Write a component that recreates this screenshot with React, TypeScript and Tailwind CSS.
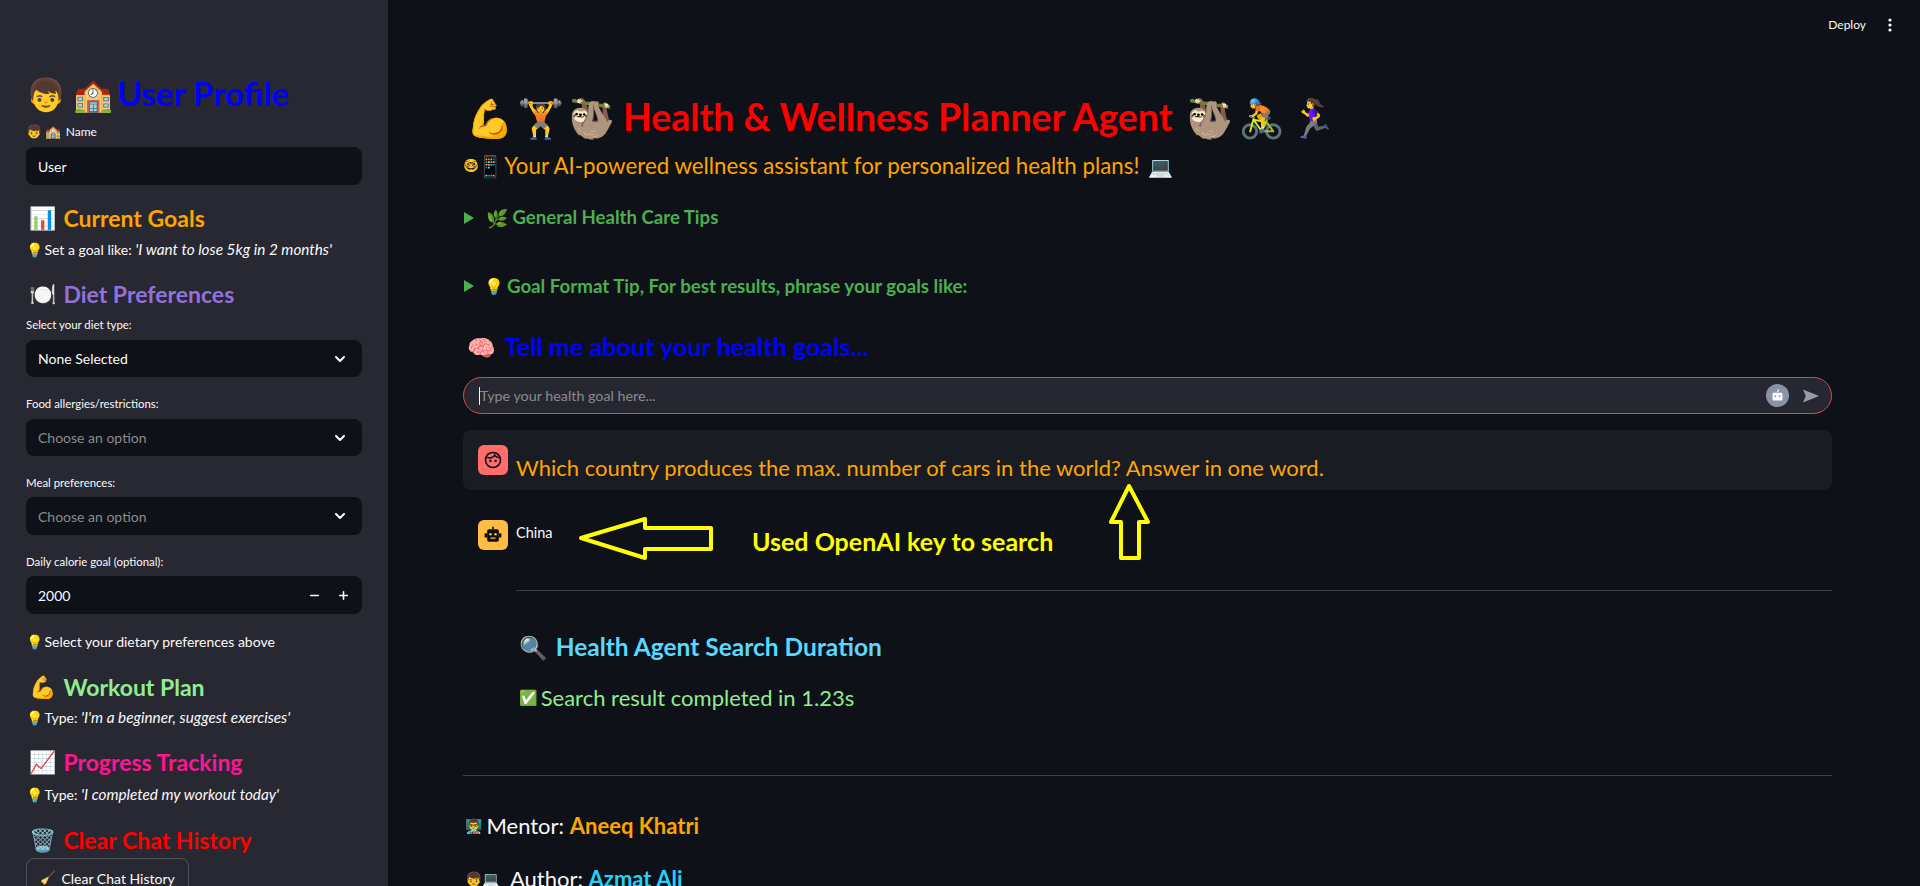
import React from "react";
import { ChevronDown, Minus, Plus } from "lucide-react";

const Bulb = () => <span className="text-[14px] mr-[1px]">💡</span>;
const It = ({ children }: { children: React.ReactNode }) => <em className="text-[15.3px]">{children}</em>;

function SideHeading({ icon, text, color }: { icon: string; text: string; color: string }) {
  return (
    <div className={`h-[28px] flex items-center text-[23px] font-bold leading-none whitespace-nowrap ${color}`}>
      <span className="ml-[3px] mr-[7px] text-[22px]">{icon}</span>
      {text}
    </div>
  );
}

function Hint({ children, className = "" }: { children: React.ReactNode; className?: string }) {
  return <div className={`h-[20px] flex items-center text-[14px] text-[#fafafa] whitespace-pre ${className}`}>{children}</div>;
}

function Label({ children, className = "" }: { children: React.ReactNode; className?: string }) {
  return <div className={`h-[20px] flex items-center text-[11.4px] text-[#fafafa] whitespace-pre ${className}`}>{children}</div>;
}

function Field({ children, className = "" }: { children: React.ReactNode; className?: string }) {
  return <div className={`w-[336px] bg-[#0e1117] rounded-[8px] flex items-center justify-between pl-[12px] pr-[14px] text-[14px] ${className}`}>{children}</div>;
}

function Sidebar() {
  return (
    <aside className="w-[388px] h-[886px] shrink-0 bg-[#282832] overflow-hidden pl-[26px]">
      <div className="mt-[74px] h-[40px] flex items-center text-[33px] font-bold text-[#0000ff] whitespace-nowrap">
        <span className="text-[32px] mr-[4px]">👦 🏫</span>User Profile
      </div>
      <div className="mt-[8px] h-[20px] flex items-center text-[12px] text-[#fafafa] whitespace-pre"><span className="text-[13px] mr-[4px]">👦 🏫</span>Name</div>
      <Field className="mt-[5px] h-[38px] text-[#fafafa]">User</Field>
      <div className="mt-[19px]"><SideHeading icon="📊" text="Current Goals" color="text-[#ffa500]" /></div>
      <Hint className="mt-[7px]"><Bulb />Set a goal like: <It>'I want to lose 5kg in 2 months'</It></Hint>
      <div className="mt-[21px]"><SideHeading icon="🍽️" text="Diet Preferences" color="text-[#9370db]" /></div>
      <Label className="mt-[7px]">Select your diet type:</Label>
      <Field className="mt-[5px] h-[37px] text-[#fafafa]">None Selected<ChevronDown size={16} strokeWidth={3} /></Field>
      <Label className="mt-[17px]">Food allergies/restrictions:</Label>
      <Field className="mt-[5px] h-[37px] text-[#8a8b90]">Choose an option<ChevronDown size={16} strokeWidth={3} className="text-[#fafafa]" /></Field>
      <Label className="mt-[17px]">Meal preferences:</Label>
      <Field className="mt-[4px] h-[38px] text-[#8a8b90]">Choose an option<ChevronDown size={16} strokeWidth={3} className="text-[#fafafa]" /></Field>
      <Label className="mt-[17px]">Daily calorie goal (optional):</Label>
      <Field className="mt-[4px] h-[38px] !pr-[12px] text-[#fafafa]">2000
        <span className="flex items-center gap-[16px]"><Minus size={13} strokeWidth={3} /><Plus size={13} strokeWidth={3} /></span>
      </Field>
      <Hint className="mt-[17px]"><Bulb />Select your dietary preferences above</Hint>
      <div className="mt-[22px]"><SideHeading icon="💪" text="Workout Plan" color="text-[#90ee90]" /></div>
      <Hint className="mt-[6px]"><Bulb />Type: <It>'I'm a beginner, suggest exercises'</It></Hint>
      <div className="mt-[21px]"><SideHeading icon="📈" text="Progress Tracking" color="text-[#ff1493]" /></div>
      <Hint className="mt-[8px]"><Bulb />Type: <It>'I completed my workout today'</It></Hint>
      <div className="mt-[22px]"><SideHeading icon="🗑️" text="Clear Chat History" color="text-[#ff0000]" /></div>
      <div className="mt-[4px] w-[163px] h-[40px] rounded-[8px] border border-[#50515a] flex items-center justify-center text-[14px] text-[#fafafa]">
        <span className="text-[13px] mr-[5px]">🧹</span>Clear Chat History
      </div>
    </aside>
  );
}

function RobotFace({ className = "" }: { className?: string }) {
  return (
    <svg viewBox="0 0 24 24" className={className} aria-hidden="true">
      <rect x="12" y="3" width="1.6" height="4" fill="currentColor" transform="rotate(20 12 5)" />
      <rect x="5" y="8" width="14" height="11" rx="1.5" fill="currentColor" />
      <circle cx="9" cy="13" r="1.3" fill="#8a93a6" />
      <circle cx="15" cy="13" r="1.3" fill="#8a93a6" />
    </svg>
  );
}

function Annotations() {
  return (
    <>
      <svg className="absolute left-[570px] top-[510px] w-[600px] h-[60px]" viewBox="570 510 600 60" aria-hidden="true">
        <polygon points="581,538 645,519 645,528 711,528 711,549 645,549 645,558" fill="none" stroke="#ffff00" strokeWidth="4" strokeLinejoin="round" />
      </svg>
      <svg className="absolute left-[1100px] top-[478px] w-[60px] h-[90px]" viewBox="1100 478 60 90" aria-hidden="true">
        <polygon points="1129,486 1111,522 1121,522 1121,558 1139,558 1139,522 1148,522" fill="none" stroke="#ffff00" strokeWidth="4" strokeLinejoin="round" />
      </svg>
      <div className="absolute left-[752px] top-[527px] h-[30px] flex items-center text-[25px] font-bold text-[#ffff00] whitespace-nowrap">Used OpenAI key to search</div>
    </>
  );
}

function Triangle() {
  return (
    <svg viewBox="0 0 10 12" className="w-[10px] h-[12px] ml-[1px]" aria-hidden="true"><polygon points="0,0 10,6 0,12" fill="#4caf50" /></svg>
  );
}

function Main() {
  const Big = ({ e }: { e: string }) => <span className="text-[38px] mr-[4px]">{e}</span>;
  return (
    <main className="flex-1 h-[886px] overflow-hidden pl-[75px] pr-[88px]">
      <div className="h-[50px] flex items-center justify-end text-[12px] text-[#fafafa] -mr-[60px]">
        Deploy
        <svg viewBox="0 0 4 14" className="w-[4px] h-[14px] ml-[22px]" aria-hidden="true"><circle cx="2" cy="2" r="1.6" fill="#fafafa" /><circle cx="2" cy="7" r="1.6" fill="#fafafa" /><circle cx="2" cy="12" r="1.6" fill="#fafafa" /></svg>
      </div>
      <h1 className="mt-[42px] h-[50px] flex items-center text-[37.4px] font-bold text-[#ff0000] whitespace-pre pl-[3px]">
        <Big e="💪" /><Big e="🏋️" /><Big e="🦥" />
        <span className="ml-[3px] mr-[14px]">Health &amp; Wellness Planner Agent</span>
        <Big e="🦥" /><Big e="🚴" /><Big e="🏃‍♀️" />
      </h1>
      <div className="mt-[9px] h-[30px] flex items-center text-[22.3px] text-[#ffa500] whitespace-pre">
        <span className="text-[13px]">🤓</span><span className="text-[21px] -ml-[2px] mr-[1px]">📱</span>Your AI-powered wellness assistant for personalized health plans!<span className="text-[20px] ml-[9px]">💻</span>
      </div>
      <div className="mt-[25px] h-[24px] flex items-center text-[18.6px] font-bold text-[#4caf50] whitespace-pre">
        <Triangle /><span className="text-[18px] ml-[12px] mr-[4px]">🌿</span>General Health Care Tips
      </div>
      <div className="mt-[44px] h-[24px] flex items-center text-[18.7px] font-bold text-[#4caf50] whitespace-pre">
        <Triangle /><span className="text-[16px] ml-[10px] mr-[3px]">💡</span>Goal Format Tip, For best results, phrase your goals like:
      </div>
      <div className="mt-[33px] h-[32px] flex items-center text-[25.2px] font-bold text-[#0000ff] whitespace-pre pl-[4px]">
        <span className="text-[23px] mr-[9px]">🧠</span>Tell me about your health goals...
      </div>
      <div className="mt-[14px] h-[37px] rounded-full border border-[#e04848] bg-[#262730] flex items-center pl-[15px] pr-[10px] text-[14.3px] text-[#8a8b90]">
        <span className="border-l border-[#fafafa] leading-[18px]">Type your health goal here...</span>
        <span className="ml-auto flex items-center gap-[14px]">
          <span className="w-[23px] h-[23px] rounded-full bg-[#8a93a6] text-white flex items-center justify-center"><RobotFace className="w-[17px] h-[17px]" /></span>
          <svg viewBox="0 0 18 14" className="w-[17px] h-[14px] mr-[1px]" aria-hidden="true"><polygon points="0,0 17,7 0,14 3,7" fill="#9a9ba8" /></svg>
        </span>
      </div>
      <div className="mt-[16px] h-[60px] rounded-[8px] bg-[#1a1c24] flex pl-[15px]">
        <span className="mt-[15px] w-[30px] h-[30px] rounded-[6px] bg-[#ff6c6c] flex items-center justify-center text-[#0e1117]">
          <svg viewBox="0 0 24 24" className="w-[20px] h-[20px]" fill="none" stroke="currentColor" strokeWidth="2" aria-hidden="true"><circle cx="12" cy="12" r="9" /><path d="M5 9c4 1 8 0 9-3 1 2 3 3 5 3" /><circle cx="9" cy="13" r=".6" /><circle cx="15" cy="13" r=".6" /></svg>
        </span>
        <span className="ml-[8px] mt-[23px] h-[28px] flex items-center text-[22px] text-[#ffa500] whitespace-nowrap">Which country produces the max. number of cars in the world? Answer in one word.</span>
      </div>
      <div className="flex pl-[15px] pt-[30px]">
        <span className="w-[30px] h-[30px] rounded-[6px] bg-[#ffbd45] flex items-center justify-center text-[#0e1117]">
          <svg viewBox="0 0 24 24" className="w-[20px] h-[20px]" fill="currentColor" aria-hidden="true"><rect x="11" y="2" width="2" height="3" /><rect x="5" y="5" width="14" height="15" rx="2" /><rect x="2" y="10" width="3" height="5" /><rect x="19" y="10" width="3" height="5" /><circle cx="9" cy="11" r="1.5" fill="#ffbd45" /><circle cx="15" cy="11" r="1.5" fill="#ffbd45" /><rect x="9" y="15" width="6" height="1.5" fill="#ffbd45" /></svg>
        </span>
        <span className="ml-[8px] h-[26px] flex items-center text-[14.5px] text-[#fafafa]">China</span>
      </div>
      <div className="ml-[53px]">
        <hr className="mt-[40px] border-0 h-px bg-[#3d3f46]" />
        <div className="mt-[40px] h-[32px] flex items-center text-[24.5px] font-bold text-[#5ad8ff] whitespace-pre pl-[3px]">
          <span className="text-[23px] mr-[8px]">🔍</span>Health Agent Search Duration
        </div>
        <div className="mt-[20px] h-[28px] flex items-center text-[22px] text-[#90ee90] whitespace-pre pl-[3px]">
          <span className="text-[15px] mr-[3px]">✅</span>Search result completed in 1.23s
        </div>
      </div>
      <hr className="mt-[64px] border-0 h-px bg-[#3d3f46]" />
      <div className="mt-[35px] h-[28px] flex items-center text-[22px] text-[#fafafa] whitespace-pre pl-[2px]">
        <span className="text-[14px] mr-[4px]">👨‍🏫</span>Mentor: <span className="font-bold text-[#ffa500]">Aneeq Khatri</span>
      </div>
      <div className="mt-[25px] h-[28px] flex items-center text-[22px] text-[#fafafa] whitespace-pre pl-[2px]">
        <span className="text-[14px] mr-[10px]">👦💻</span>Author: <span className="font-bold text-[#29d0f5]">Azmat Ali</span>
      </div>
    </main>
  );
}

export default function App() {
  return (
    <div className="relative flex w-full h-[886px] overflow-hidden bg-[#0e1117] font-['Lato','Noto_Color_Emoji',sans-serif]">
      <Sidebar />
      <Main />
      <Annotations />
    </div>
  );
}
